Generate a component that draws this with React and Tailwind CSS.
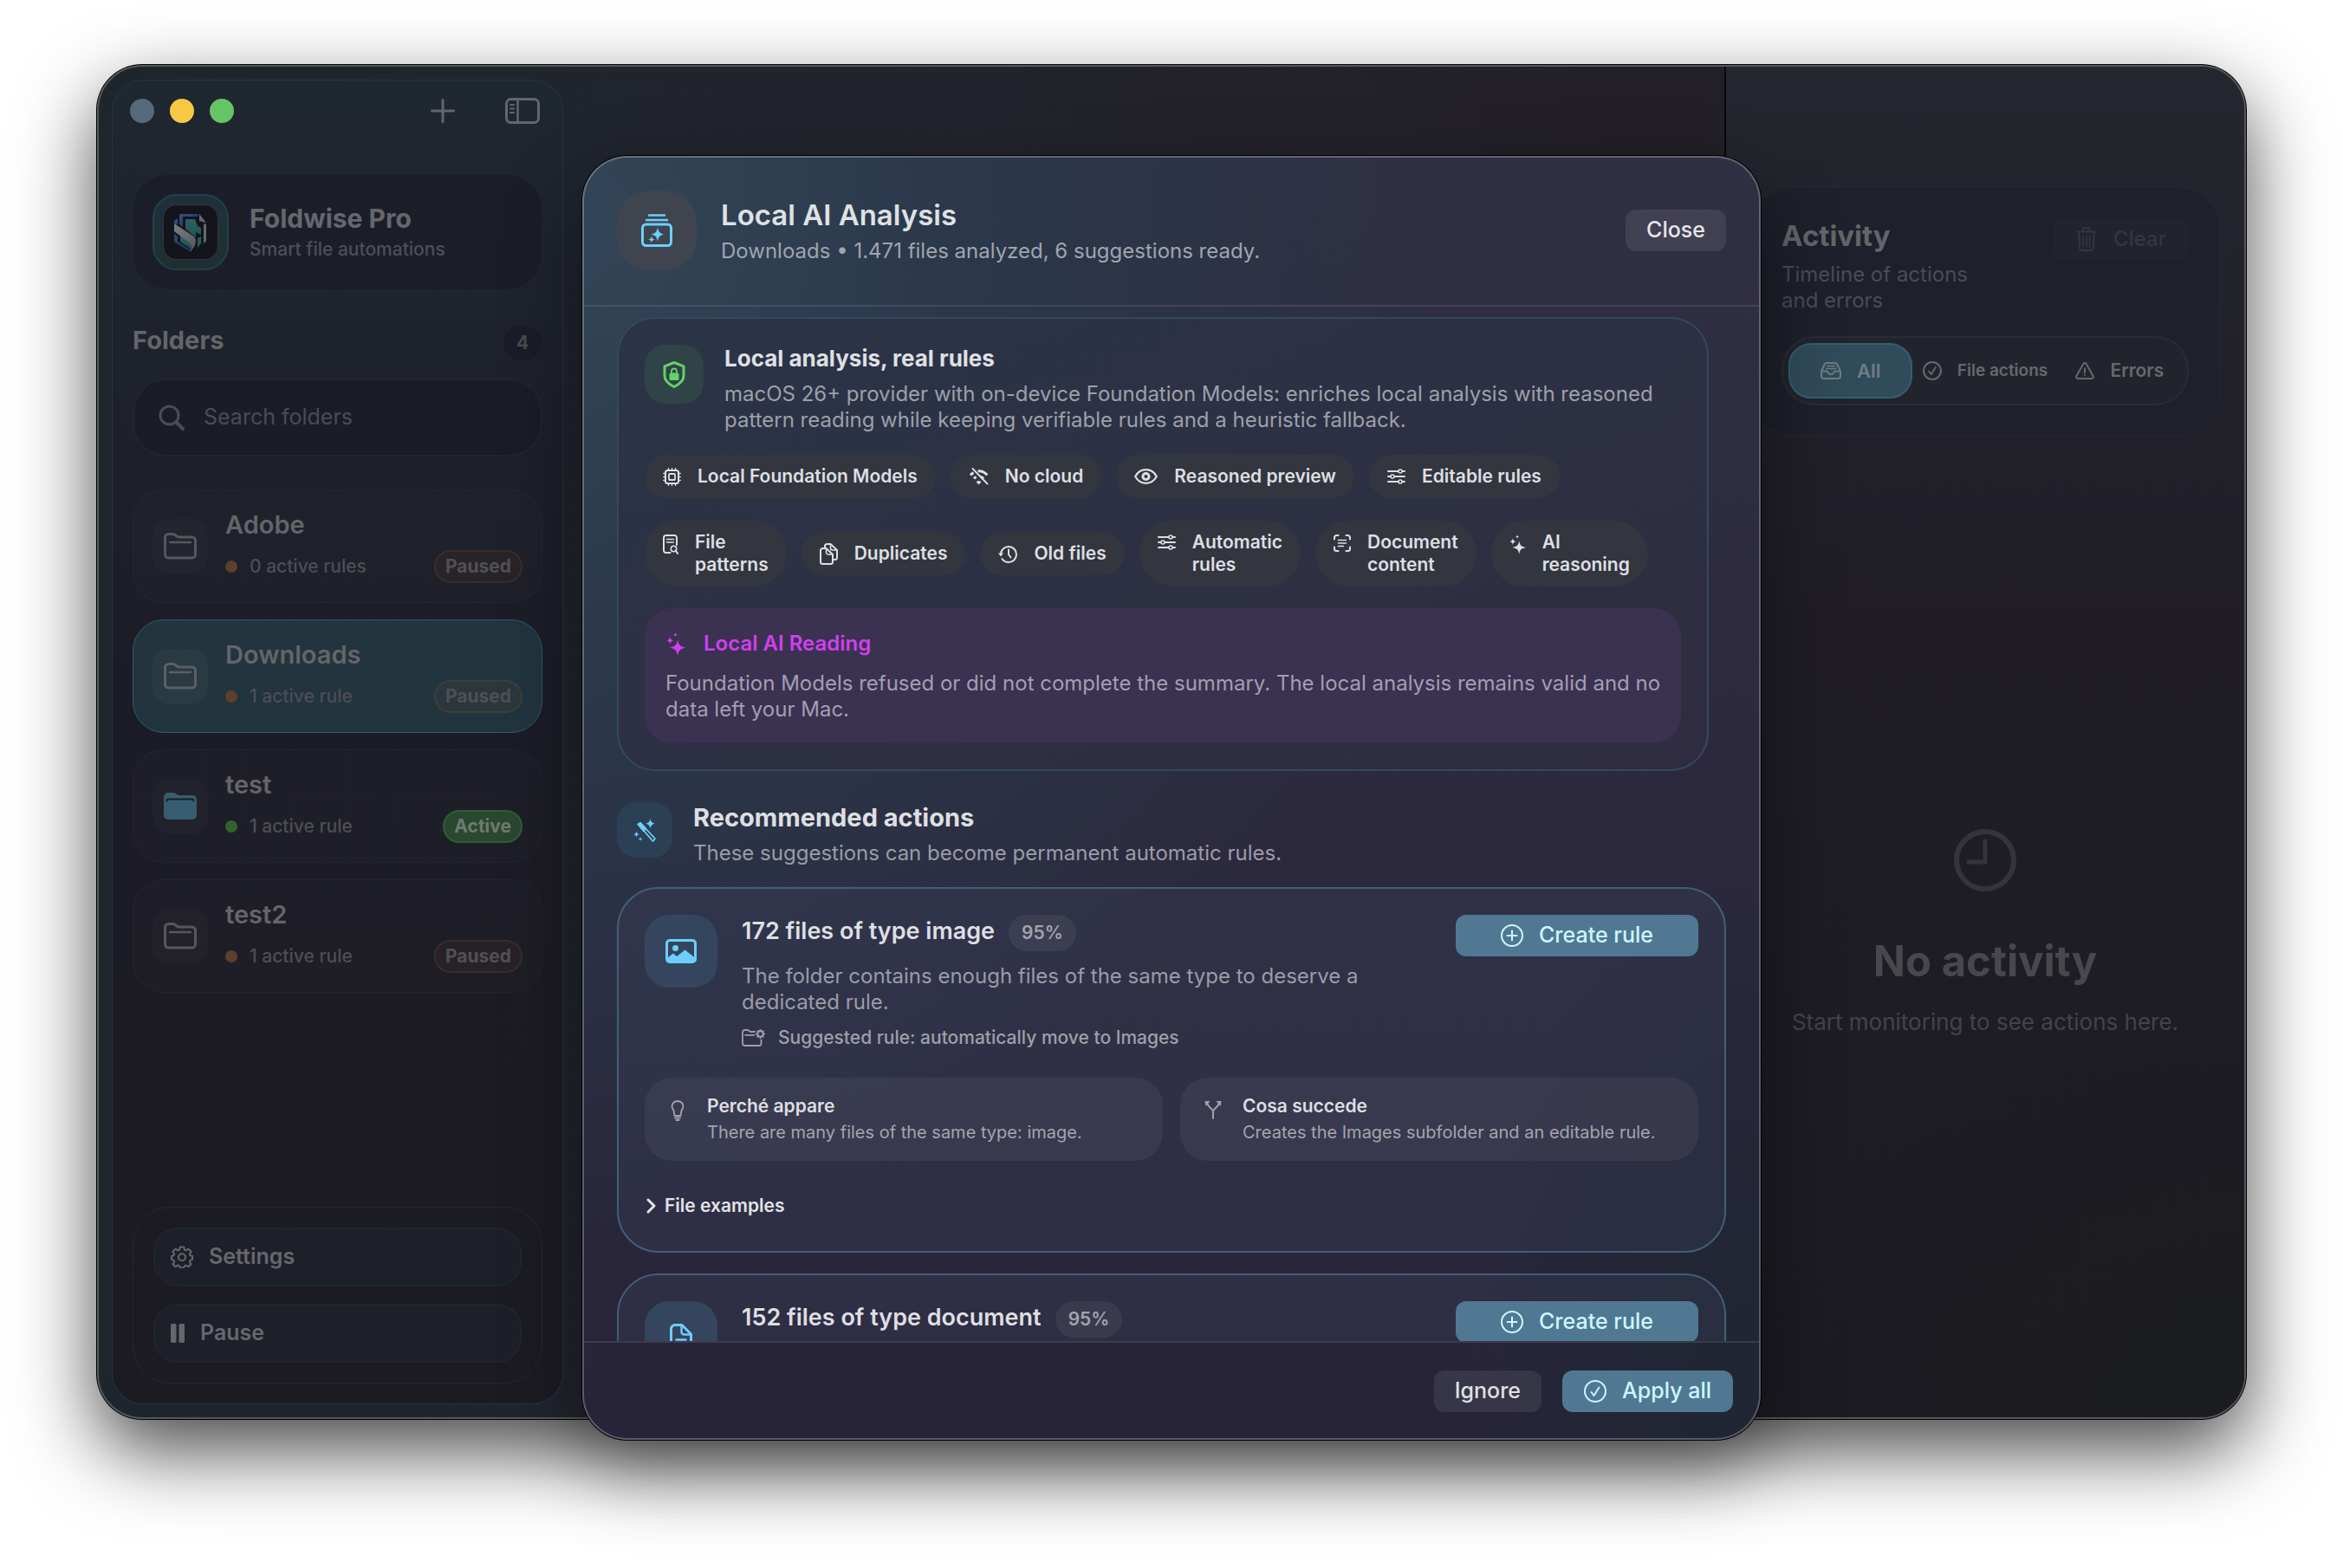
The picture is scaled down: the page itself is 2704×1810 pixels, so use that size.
import { useState } from 'react'
import clsx from 'clsx'

function Icon({ w, h, sw = 2, className, children }) {
  return (
    <svg
      width={w}
      height={h}
      viewBox={`0 0 ${w} ${h}`}
      fill="none"
      stroke="currentColor"
      strokeWidth={sw}
      strokeLinecap="round"
      strokeLinejoin="round"
      className={clsx('shrink-0', className)}
      aria-hidden="true"
    >
      {children}
    </svg>
  )
}

const PlusIcon = () => (
  <Icon w={28} h={28} sw={3}><path d="M14 1.5v25M1.5 14h25" /></Icon>
)

const SidebarIcon = () => (
  <Icon w={40} h={30} sw={3}>
    <rect x="1.5" y="1.5" width="37" height="27" rx="5" />
    <path d="M14.5 2v26" strokeWidth="2.5" />
    <path d="M6 8h4M6 12.5h4M6 17h4" strokeWidth="2" />
  </Icon>
)

const SearchIcon = () => (
  <Icon w={30} h={30} sw={3}>
    <circle cx="12.5" cy="12.5" r="10.5" />
    <path d="M20.5 20.5l7.5 7.5" strokeWidth="4" />
  </Icon>
)

const FolderIcon = () => (
  <Icon w={38} h={31} sw={3}>
    <path d="M1.5 25V5.5a4 4 0 0 1 4-4h5c3 0 4 3.5 7 3.5h15a4 4 0 0 1 4 4v16a4 4 0 0 1-4 4h-27a4 4 0 0 1-4-4z" />
    <path d="M7 11h24" strokeWidth="2.5" />
  </Icon>
)

const FolderFillIcon = () => (
  <Icon w={38} h={31}>
    <path d="M0 7V5a5 5 0 0 1 5-5h6c3 0 4 3 7 3h15a5 5 0 0 1 5 4.5V26a5 5 0 0 1-5 5H5a5 5 0 0 1-5-5z" fill="currentColor" stroke="none" />
    <path d="M3.5 9.5c0-1 .7-2 2-2h27c1.300 0 2 1 2 2" stroke="#1c1c26" strokeWidth="2" />
  </Icon>
)

const GearIcon = () => (
  <Icon w={26} h={26}>
    <path d="M10.8 1.500h4.400l.7 3.100 1.900.8 2.700-1.700 3.100 3.100-1.700 2.700.8 1.900 2.300.6v4l-2.300.6-.8 1.900 1.700 2.700-3.100 3.100-2.700-1.700-1.900.8-.7 2.100h-4.400l-.7-2.100-1.900-.8-2.700 1.700-3.100-3.100 1.700-2.700-.8-1.900-2.300-.6v-4l2.300-.6.8-1.900-1.700-2.700 3.100-3.100 2.700 1.700 1.900-.8z" />
    <circle cx="13" cy="13.200" r="4" />
  </Icon>
)

const PauseIcon = () => (
  <Icon w={16} h={22}>
    <rect width="6.5" height="22" rx="1.5" fill="currentColor" stroke="none" />
    <rect x="9.5" width="6.5" height="22" rx="1.5" fill="currentColor" stroke="none" />
  </Icon>
)

const TrashIcon = () => (
  <Icon w={24} h={28}>
    <path d="M1 5.5h22M8 5V3a2 2 0 0 1 2-2h4a2 2 0 0 1 2 2v2M3 5.5l1.200 18.500a3 3 0 0 0 3 3h9.600a3 3 0 0 0 3-3L21 5.500" />
    <path d="M8 10l.4 12.500M12 10v12.500M16 10l-.4 12.500" strokeWidth="1.5" />
  </Icon>
)

const TrayIcon = () => (
  <Icon w={24} h={20}>
    <path d="M1 10.500L4.500 3a3 3 0 0 1 2.700-2h9.600a3 3 0 0 1 2.700 2L23 10.500V16a3 3 0 0 1-3 3H4a3 3 0 0 1-3-3z" />
    <path d="M1 10.500h6.500c.8 0 1 3.500 4.500 3.500s3.700-3.500 4.500-3.500H23" />
    <path d="M7.500 4.500h9M6.500 7.500h11" strokeWidth="1.5" />
  </Icon>
)

const CheckCircleIcon = ({ size = 22 }) => (
  <Icon w={size} h={size}>
    <circle cx={size / 2} cy={size / 2} r={size / 2 - 1} />
    <path d={size > 22 ? 'M8.500 14l3 4 6-9.500' : 'M7 11.500l2.800 3.500 5-8'} />
  </Icon>
)

const PlusCircleIcon = () => (
  <Icon w={26} h={26}>
    <circle cx="13" cy="13" r="12" />
    <path d="M13 7.500v11M7.500 13h11" />
  </Icon>
)

const WarnIcon = () => (
  <Icon w={22} h={20}>
    <path d="M9.300 2a2 2 0 0 1 3.400 0l8 14.200A1.900 1.900 0 0 1 19 19H3a1.900 1.900 0 0 1-1.700-2.800z" />
    <path d="M11 7v5.500M11 15.500v.1" />
  </Icon>
)

const ClockIcon = () => (
  <Icon w={72} h={72} sw={6}>
    <circle cx="36" cy="36" r="33" />
    <path d="M36 14v24H17" strokeWidth="5" />
  </Icon>
)

const StackIcon = () => (
  <Icon w={36} h={38} sw={3}>
    <path d="M9 1.500h18M6 7h24" strokeWidth="2.5" />
    <rect x="1.5" y="12" width="33" height="24.5" rx="4" />
    <path d="M19 15c1 5.800 2.300 7.400 7.500 8.500-5.200 1.100-6.500 2.700-7.500 8.500-1-5.800-2.300-7.400-7.500-8.500 5.200-1.100 6.500-2.700 7.500-8.500zM12 25.500c.5 2.700 1.200 3.500 3.800 4-2.600.5-3.300 1.300-3.800 4-.5-2.700-1.200-3.500-3.800-4 2.600-.5 3.300-1.300 3.800-4z" fill="currentColor" stroke="none" />
  </Icon>
)

const ShieldLockIcon = () => (
  <Icon w={26} h={31} sw={3}>
    <path d="M13 1.500l11 4.300v11c0 6-4.500 9.500-11 12.700C6.500 26.300 2 22.800 2 16.800v-11z" />
    <rect x="7.5" y="13.5" width="11" height="8.5" rx="1.5" fill="currentColor" stroke="none" />
    <path d="M10 14v-2.500a3 3 0 0 1 6 0V14" strokeWidth="1.8" />
  </Icon>
)

const CpuIcon = () => (
  <Icon w={21} h={21}>
    <rect x="3" y="3" width="15" height="15" rx="2.5" />
    <rect x="7" y="7" width="7" height="7" rx="1" strokeWidth="1.8" />
    <path d="M6.500 .8v1.500M10.500 .8v1.500M14.500 .8v1.500M6.500 18.700v1.500M10.500 18.700v1.500M14.500 18.700v1.500M.8 6.500h1.500M.8 10.500h1.500M.8 14.500h1.500M18.700 6.500h1.500M18.700 10.500h1.500M18.700 14.500h1.500" strokeWidth="1.4" />
  </Icon>
)

const WifiOffIcon = () => (
  <Icon w={23} h={20} sw={3}>
    <path d="M2 8.500C3 7.300 4.200 6.400 5.500 5.600M10.500 3.700c4-.4 7.900 1.300 10.800 4.600M6 12.500c.8-.9 1.700-1.500 2.700-2M13.800 10.300c1.200.5 2.300 1.200 3.200 2.200" strokeLinecap="butt" />
    <path d="M11.500 19.500l-3-3.300c1.700-1.500 4.300-1.500 6 0z" fill="currentColor" stroke="none" />
    <path d="M4.500 1l17 17.500" strokeWidth="1.8" />
  </Icon>
)

const EyeIcon = () => (
  <Icon w={27} h={18} sw={2.2}>
    <path d="M1.200 9C4 4 8.500 1.200 13.500 1.200S23 4 25.800 9C23 14 18.500 16.800 13.500 16.800S4 14 1.200 9z" />
    <circle cx="13.5" cy="9" r="3.6" strokeWidth="3" />
  </Icon>
)

const SlidersIcon = () => (
  <Icon w={21} h={18}>
    <path d="M1 3h11.500M17.500 3H20M1 9h2.500M8.500 9H20M1 15h11.500M17.500 15H20" />
    <circle cx="15" cy="3" r="2" strokeWidth="1.6" />
    <circle cx="6" cy="9" r="2" strokeWidth="1.6" />
    <circle cx="15" cy="15" r="2" strokeWidth="1.6" />
  </Icon>
)

const FileSearchIcon = () => (
  <Icon w={18} h={23}>
    <path d="M8.500 21H3.500A2.500 2.500 0 0 1 1 18.500v-15A2.500 2.500 0 0 1 3.500 1h10A2.500 2.500 0 0 1 16 3.500V12" />
    <path d="M4.500 5.500h8M4.500 9h8" strokeWidth="1.5" />
    <circle cx="12.5" cy="16.5" r="3.2" strokeWidth="1.6" />
    <path d="M15 19l2.200 3" />
  </Icon>
)

const CopyIcon = () => (
  <Icon w={21} h={25}>
    <path d="M6 6V3.500A2.500 2.500 0 0 1 8.500 1h4L20 8v8.500a2.500 2.500 0 0 1-2.500 2.500H15" />
    <path d="M12.500 1.500v4A2.500 2.500 0 0 0 15 8h5" strokeWidth="1.6" />
    <path d="M1 8.500A2.500 2.500 0 0 1 3.500 6h4l7.500 7v8.500a2.500 2.500 0 0 1-2.500 2.500h-9A2.500 2.500 0 0 1 1 21.500z" />
    <path d="M7.500 6.500v4A2.500 2.500 0 0 0 10 13h5" strokeWidth="1.6" />
  </Icon>
)

const HistoryIcon = () => (
  <Icon w={22} h={21}>
    <path d="M3 10.500A9 9 0 1 1 12 20c-3.500 0-6-1.500-7.500-4" />
    <path d="M0 9.500h6L3 13.500z" fill="currentColor" stroke="none" />
    <path d="M12 5.500v5.500l2.500 3.500" />
  </Icon>
)

const ScanTextIcon = () => (
  <Icon w={20} h={20}>
    <path d="M1 5.500v-2A2.500 2.500 0 0 1 3.500 1h2M14.500 1h2A2.500 2.500 0 0 1 19 3.500v2M19 14.500v2a2.500 2.500 0 0 1-2.500 2.500h-2M5.500 19h-2A2.500 2.500 0 0 1 1 16.500v-2" />
    <path d="M5.500 6.500h9M5.500 10h9M5.500 13.500h6" strokeWidth="1.6" />
  </Icon>
)

const SparklesIcon = ({ w = 19, h = 23 }) => (
  <svg width={w} height={h} viewBox="0 0 22 26" fill="currentColor" className="shrink-0" aria-hidden="true">
    <path d="M13 8c1 6 2.800 7.800 9 9-6.200 1.200-8 3-9 9-1-6-2.800-7.800-9-9 6.200-1.200 8-3 9-9zM4.500 4.500c.5 3 1.500 4 4.500 4.500-3 .5-4 1.500-4.500 4.500C4 10.500 3 9.500 0 9c3-.5 4-1.500 4.500-4.500zM10.500 0c.3 1.800.9 2.400 2.700 2.700-1.800.3-2.400.9-2.700 2.700-.3-1.800-.9-2.400-2.700-2.700C9.600 2.400 10.200 1.800 10.500 0z" />
  </svg>
)

const WandIcon = () => (
  <Icon w={26} h={27} sw={2}>
    <path d="M5.500 6.500L8 5l17 18-2.500 3z" strokeWidth="1.8" />
    <path d="M5.500 6.500L8 5l6 6.500-2.500 2.500z" fill="currentColor" />
    <path d="M19.500 0c.8 3.800 1.800 4.900 5.500 5.700-3.700.8-4.700 1.900-5.500 5.700-.8-3.800-1.800-4.900-5.500-5.700 3.700-.8 4.700-1.900 5.500-5.700zM3.500 14.500c.5 2.400 1.200 3.100 3.500 3.600-2.300.5-3 1.200-3.500 3.600-.5-2.400-1.200-3.100-3.500-3.600 2.300-.5 3-1.200 3.500-3.600zM8 21c.3 1.800.8 2.200 2.500 2.600-1.700.4-2.200.8-2.500 2.600-.3-1.800-.8-2.200-2.500-2.600C7.200 23.200 7.700 22.800 8 21z" fill="currentColor" stroke="none" />
  </Icon>
)

const PhotoIcon = () => (
  <Icon w={36} h={28} sw={3}>
    <rect x="1.5" y="1.5" width="33" height="25" rx="3.5" />
    <circle cx="11.5" cy="10.5" r="3.5" fill="currentColor" stroke="none" />
    <path d="M2 22l7-5.500 4 3.500 9.500-7.500L34 21.500V25l-2 1.500H4L2 25z" fill="currentColor" stroke="none" />
  </Icon>
)

const DocIcon = () => (
  <Icon w={26} h={32} sw={3}>
    <path d="M1.500 6A4.500 4.500 0 0 1 6 1.500h8L24.500 12v14a4.500 4.500 0 0 1-4.500 4.500H6A4.500 4.500 0 0 1 1.500 26z" />
    <path d="M13.500 2v7.500a3 3 0 0 0 3 3H24M7.500 18.500h11M7.500 24h11" strokeWidth="2.5" />
  </Icon>
)

const FolderGearIcon = () => (
  <Icon w={27} h={20} sw={1.8}>
    <path d="M22.500 12.500v4a2.500 2.500 0 0 1-2.500 2.500H3.500A2.500 2.500 0 0 1 1 16.500v-13A2.500 2.500 0 0 1 3.500 1h3c2 0 2.300 2 4 2h4.500M4 6.800h10.500" />
    <circle cx="21.5" cy="5.5" r="3.3" strokeWidth="2.2" />
    <path d="M21.500 .5v1M21.500 9.500v1M16.500 5.500h1M25.500 5.500h1M18 2l.7.7M24.300 8.300l.7.7M18 9l.7-.7M24.300 2.700l.7-.7" strokeWidth="1.6" />
  </Icon>
)

const BulbIcon = () => (
  <Icon w={28} h={24} sw={1.8}>
    <path d="M10.500 18l-1-6C8.500 10 7.500 9 7.500 7a6.500 6 0 0 1 13 0c0 2-1 3-2 5l-1 6zM11 20.500h6M12.500 23h3" />
  </Icon>
)

const BranchIcon = () => (
  <Icon w={28} h={22}>
    <path d="M14 21v-8c0-3-5.500-4-6.500-9M14 13c0-3 5.500-4 6.500-9" />
    <path d="M4.500 1h6L5.500 7zM23.500 1h-6l5 6z" fill="currentColor" stroke="none" />
  </Icon>
)

const ChevronIcon = () => (
  <Icon w={14} h={18} sw={3}><path d="M4 2l7 7-7 7" /></Icon>
)

function Logo() {
  return (
    <svg width="64" height="64" viewBox="0 0 64 64" aria-hidden="true">
      <defs>
        <linearGradient id="logoBlue" x1="0" y1="0" x2="1" y2="1">
          <stop offset="0" stopColor="#34507e" />
          <stop offset="1" stopColor="#1d2f5c" />
        </linearGradient>
        <linearGradient id="logoTeal" x1="0" y1="0" x2="0" y2="1">
          <stop offset="0" stopColor="#2c6064" />
          <stop offset="1" stopColor="#1f5550" />
        </linearGradient>
        <linearGradient id="logoSilver" x1="0" y1="0" x2="1" y2="1">
          <stop offset="0" stopColor="#7b7d84" />
          <stop offset="1" stopColor="#54565e" />
        </linearGradient>
      </defs>
      <rect x=".5" y=".5" width="63" height="63" rx="15" fill="#13141c" stroke="#34363f" />
      <path d="M20 11h22l-3 3H23v12l-4-3V12z" fill="url(#logoBlue)" />
      <path d="M26 17h11l3 8 4 2v8l-6-3v6L26 28z" fill="url(#logoTeal)" />
      <path d="M13 19l4-3v7l-4-1zM13 34l4 3v6l15 9v3L13 43z" fill="url(#logoBlue)" />
      <path d="M20 35l12 8v8l-12-8z" fill="url(#logoTeal)" />
      <path d="M13 22l20 13c5 3 6 6 4 12l-5 8c1-6 1-10-3-12L13 31z" fill="url(#logoSilver)" />
      <path d="M42 11l8 10-8-2zM47 22l3 1v19l-3 3z" fill="#666a70" />
      <path d="M40 39l4-2v8l-4 5z" fill="url(#logoTeal)" />
    </svg>
  )
}

const folders = [
  { name: 'Adobe', rules: '0 active rules' },
  { name: 'Downloads', rules: '1 active rule', selected: true },
  { name: 'test', rules: '1 active rule', active: true },
  { name: 'test2', rules: '1 active rule' }
]

const modeChips = [
  { label: 'Local Foundation Models', icon: <CpuIcon /> },
  { label: 'No cloud', icon: <WifiOffIcon /> },
  { label: 'Reasoned preview', icon: <EyeIcon /> },
  { label: 'Editable rules', icon: <SlidersIcon /> }
]

const scopeChips = [
  { label: 'File patterns', icon: <FileSearchIcon />, wrap: true },
  { label: 'Duplicates', icon: <CopyIcon /> },
  { label: 'Old files', icon: <HistoryIcon /> },
  { label: 'Automatic rules', icon: <SlidersIcon />, wrap: true },
  { label: 'Document content', icon: <ScanTextIcon />, wrap: true },
  { label: 'AI reasoning', icon: <SparklesIcon />, wrap: true }
]

const suggestions = [
  {
    title: '172 files of type image',
    score: '95%',
    icon: <PhotoIcon />,
    details: {
      summary: 'The folder contains enough files of the same type to deserve a dedicated rule.',
      rule: 'Suggested rule: automatically move to Images',
      why: 'There are many files of the same type: image.',
      effect: 'Creates the Images subfolder and an editable rule.'
    }
  },
  {
    title: '152 files of type document',
    score: '95%',
    icon: <DocIcon />
  }
]

const filters = [
  { id: 'all', label: 'All', icon: <TrayIcon />, size: 'text-[22px]' },
  { id: 'files', label: 'File actions', icon: <CheckCircleIcon />, size: 'text-[19px]' },
  { id: 'errors', label: 'Errors', icon: <WarnIcon />, size: 'text-[21px]' }
]

function FolderItem({ folder }) {
  return (
    <button
      type="button"
      className={clsx(
        'flex w-full items-center gap-5 rounded-[36px] border px-[22px] py-[22px] text-left',
        folder.selected ? 'border-[#2b5d72] bg-[#22343e]' : 'border-white/3 bg-white/1'
      )}
    >
      <span
        className={clsx(
          'flex size-16 shrink-0 items-center justify-center rounded-[20px]',
          folder.selected && 'bg-[#2a3a42] text-[#596064]',
          folder.active && 'bg-white/2 text-[#375d71]',
          !folder.selected && !folder.active && 'bg-white/2 text-[#57575c]'
        )}
      >
        {folder.active ? <FolderFillIcon /> : <FolderIcon />}
      </span>
      <span className="flex min-w-0 flex-1 flex-col gap-[11px]">
        <span className="text-[29px] leading-9 font-semibold text-[#656569]">{folder.name}</span>
        <span className="flex h-[38px] items-center">
          <span className={clsx('mr-3.5 size-3.5 rounded-full', folder.active ? 'bg-[#33622f]' : 'bg-[#5c402c]')} />
          <span className="text-[21px] leading-7 font-medium text-[#4d4e54]">{folder.rules}</span>
          <span
            className={clsx(
              'ml-auto flex h-[38px] items-center rounded-full border-2 px-[11px] text-[21px] font-bold',
              folder.active
                ? 'border-[#2f5d35] bg-[#2a4730] text-[#6e7a70]'
                : 'border-[#d0702d]/12 bg-[#d0702d]/5 text-[#515054]'
            )}
          >
            {folder.active ? 'Active' : 'Paused'}
          </span>
        </span>
      </span>
    </button>
  )
}

function Sidebar() {
  return (
    <aside className="m-[15px] flex w-[521px] shrink-0 flex-col rounded-[36px] border border-[#26344a] bg-linear-to-b from-[#1f2730] via-[#1c1c27] via-45% to-[#1c1b22]">
      <div className="flex h-[70px] shrink-0 items-center pr-[26px] pl-5 text-[#656669]">
        <div className="flex gap-[18px]">
          <button type="button" aria-label="Close window" className="size-7 rounded-full bg-[#56697d]" />
          <button type="button" aria-label="Minimize window" className="size-7 rounded-full bg-[#f5c944]" />
          <button type="button" aria-label="Zoom window" className="size-7 rounded-full bg-[#66c466]" />
        </div>
        <button type="button" aria-label="Add folder" className="ml-auto"><PlusIcon /></button>
        <button type="button" aria-label="Toggle sidebar" className="ml-[58px]"><SidebarIcon /></button>
      </div>

      <div className="flex min-h-0 flex-1 flex-col px-[23px] pt-[38px] pb-[23px]">
        <div className="flex items-center gap-6 rounded-[40px] border border-white/3 bg-[#1b1e29] p-[22px]">
          <div className="flex size-[88px] items-center justify-center rounded-[28px] border-2 border-[#233f4a] bg-linear-to-b from-[#1f303b] to-[#1f2f30]">
            <Logo />
          </div>
          <div className="flex flex-col gap-1">
            <h1 className="text-[30px] leading-9 font-bold text-[#66676c]">Foldwise Pro</h1>
            <p className="text-[21px] leading-7 font-medium text-[#4d4f56]">Smart file automations</p>
          </div>
        </div>

        <div className="mt-10 flex items-start justify-between">
          <h2 className="text-[29px] leading-9 font-bold text-[#646569]">Folders</h2>
          <span className="flex h-[42px] w-[46px] items-center justify-center rounded-full border border-white/3 bg-[#1b1c27] text-[21px] font-bold text-[#4a4b52]">4</span>
        </div>

        <label className="mt-5 flex h-[90px] shrink-0 items-center gap-[22px] rounded-[38px] border-2 border-white/4 bg-[#1a1d28] px-7 text-[#4b4c52]">
          <SearchIcon />
          <input
            type="search"
            aria-label="Search folders"
            placeholder="Search folders"
            className="min-w-0 flex-1 bg-transparent text-[25px] outline-none placeholder:text-[#4b4c52]"
          />
        </label>

        <nav className="mt-[38px] flex flex-col gap-[19px]">
          {folders.map((folder) => (
            <FolderItem key={folder.name} folder={folder} />
          ))}
        </nav>

        <div className="mt-auto flex flex-col gap-5 rounded-[44px] border border-white/5 p-[23px] text-[25px] font-semibold text-[#66676c]">
          <button type="button" className="flex h-[68px] items-center gap-[18px] rounded-[28px] border-2 border-[#1e2630] bg-[#1d1f29] px-[18px]">
            <GearIcon />
            Settings
          </button>
          <button type="button" className="flex h-[68px] items-center gap-[18px] rounded-[28px] border-2 border-[#1e2630] bg-[#1d1f29] px-[18px]">
            <PauseIcon />
            Pause
          </button>
        </div>
      </div>
    </aside>
  )
}

function ActivityPanel() {
  const [filter, setFilter] = useState('all')

  return (
    <aside className="ml-auto flex w-[600px] shrink-0 flex-col border-l-2 border-[#08080a] bg-[radial-gradient(ellipse_90%_30%_at_100%_100%,#1b1d20_0%,transparent_100%),linear-gradient(to_bottom,#24272f,#22222b_18%,#201d27_40%,#1e1c24_70%,#1d1b22)] px-7 pt-[139px]">
      <section className="rounded-[48px] border border-[#212b36] bg-[#1e202b] p-[35px]">
        <div className="flex items-start justify-between">
          <div>
            <h2 className="text-[33px] leading-10 font-bold text-[#646569]">Activity</h2>
            <p className="mt-[10px] w-[240px] text-[24px] leading-[30px] text-[#4b4c53]">Timeline of actions and errors</p>
          </div>
          <button type="button" disabled className="flex h-12 items-center gap-[19px] rounded-xl bg-[#21242c] px-[26px] text-[24px] font-medium text-[#33363e]">
            <TrashIcon />
            Clear
          </button>
        </div>
        <div className="mt-[26px] grid grid-cols-3 gap-3 rounded-[38px] border-2 border-white/4 bg-[#22242d] p-1.5">
          {filters.map((f) => (
            <button
              key={f.id}
              type="button"
              onClick={() => setFilter(f.id)}
              className={clsx(
                'flex h-16 items-center justify-center gap-[18px] rounded-[26px] border-2 font-semibold whitespace-nowrap',
                f.size,
                filter === f.id ? 'border-[#336072] bg-[#304b59] text-[#6f7d84]' : 'border-transparent text-[#67686c]'
              )}
            >
              {f.icon}
              {f.label}
            </button>
          ))}
        </div>
      </section>

      <div className="flex flex-1 flex-col items-center justify-center pt-3 text-center">
        <span className="text-[#35343b]"><ClockIcon /></span>
        <p className="mt-[51px] text-[49px] leading-[60px] font-bold text-[#48474c]">No activity</p>
        <p className="mt-6 text-[26px] leading-8 text-[#444348]">Start monitoring to see actions here.</p>
      </div>
    </aside>
  )
}

function Chip({ chip }) {
  return (
    <span
      className={clsx(
        'flex gap-[19px] rounded-[38px] bg-[#33363f] px-[21px] py-3 text-[21px] leading-[26px] font-semibold text-[#dedfe2]',
        chip.wrap ? 'w-min items-start' : 'items-center whitespace-nowrap'
      )}
    >
      <span className={clsx(chip.wrap && 'mt-1')}>{chip.icon}</span>
      {chip.label}
    </span>
  )
}

function AnalysisSummary() {
  return (
    <section className="mr-5 flex flex-col gap-6 rounded-[44px] border-2 border-[#334960] bg-linear-to-br from-[#2b3447] to-[#2f2c41] p-[30px]">
      <div className="flex items-start gap-6">
        <span className="flex size-[68px] shrink-0 items-center justify-center rounded-[24px] bg-[#304347] text-[#65d267]">
          <ShieldLockIcon />
        </span>
        <div>
          <h3 className="text-[26px] leading-8 font-bold text-[#dfe0e3]">Local analysis, real rules</h3>
          <p className="mt-[10px] text-[24px] leading-[30px] text-[#9da0aa]">
            macOS 26+ provider with on-device Foundation Models: enriches local analysis with reasoned pattern reading while keeping verifiable rules and a heuristic fallback.
          </p>
        </div>
      </div>
      <div className="flex h-[52px] items-center gap-[17px]">
        {modeChips.map((chip) => (
          <Chip key={chip.label} chip={chip} />
        ))}
      </div>
      <div className="flex h-[78px] items-center gap-[17px]">
        {scopeChips.map((chip) => (
          <Chip key={chip.label} chip={chip} />
        ))}
      </div>
      <div className="rounded-[32px] bg-[#3b3151] py-6 pr-4 pl-6">
        <h4 className="flex items-center gap-5 text-[24px] leading-[34px] font-semibold text-[#d03ff0]">
          <SparklesIcon w={24} h={27} />
          Local AI Reading
        </h4>
        <p className="mt-[14px] text-[24px] leading-[30px] text-[#a39fb0]">
          Foundation Models refused or did not complete the summary. The local analysis remains valid and no data left your Mac.
        </p>
      </div>
    </section>
  )
}

function InfoBox({ icon, title, children }) {
  return (
    <div className="flex items-start gap-5 rounded-[32px] bg-white/5 px-6 py-[19px]">
      <span className="mt-[7px] text-[#a3a2ad]">{icon}</span>
      <div className="flex flex-col gap-[2px] leading-7">
        <h4 className="text-[21px] font-semibold text-[#dedee1]">{title}</h4>
        <p className="text-[20px] text-[#a5a4ae]">{children}</p>
      </div>
    </div>
  )
}

function SuggestionCard({ item }) {
  const { details } = item

  return (
    <article className="rounded-[48px] border-2 border-[#3f607a] bg-[#3a4058]/35 p-[30px]">
      <div className="flex items-start gap-7">
        <span className="flex size-[84px] shrink-0 items-center justify-center rounded-[28px] bg-[#35455d] text-[#6ccffb]">
          {item.icon}
        </span>
        <div className="min-w-0 flex-1">
          <div className="flex items-baseline gap-4">
            <h3 className="text-[27px] leading-[34px] font-semibold text-[#dfdfe2]">{item.title}</h3>
            <span className="rounded-full bg-white/6 px-[15px] text-[21px] leading-[42px] font-semibold text-[#a3a2ac]">{item.score}</span>
          </div>
          {details && (
            <>
              <p className="mt-[14px] text-[24px] leading-[30px] text-[#9c9ba8]">{details.summary}</p>
              <p className="mt-3 flex items-center gap-[15px] text-[21px] leading-7 font-medium text-[#a09faa]">
                <FolderGearIcon />
                {details.rule}
              </p>
            </>
          )}
        </div>
        <button type="button" className="flex h-12 w-[280px] shrink-0 items-center justify-center gap-[18px] rounded-xl bg-[#507893] text-[25px] font-medium text-[#cdf6fd]">
          <PlusCircleIcon />
          Create rule
        </button>
      </div>
      {details && (
        <>
          <div className="mt-8 grid grid-cols-2 gap-5">
            <InfoBox icon={<BulbIcon />} title="Perché appare">{details.why}</InfoBox>
            <InfoBox icon={<BranchIcon />} title="Cosa succede">{details.effect}</InfoBox>
          </div>
          <button type="button" className="mt-7 flex items-center gap-[9px] pt-2.5 pb-2 text-[21px] leading-7 font-semibold text-[#e3e3e6]">
            <ChevronIcon />
            File examples
          </button>
        </>
      )}
    </article>
  )
}

function AnalysisDialog() {
  return (
    <div
      role="dialog"
      aria-labelledby="analysis-title"
      className="absolute inset-x-0 top-[105px] -bottom-6 mx-auto flex w-full max-w-[1360px] flex-col overflow-hidden rounded-[52px] border-2 border-white/25 bg-[#2a283c] bg-[radial-gradient(ellipse_75%_80%_at_0%_5%,#334558_0%,#2b374a_45%,transparent_100%),radial-gradient(ellipse_25%_45%_at_100%_100%,#1f2632_0%,transparent_100%),linear-gradient(to_bottom,#302f43,#2c293e_50%,#272439)] bg-origin-border shadow-[0_0_0_1px_#000,0_36px_90px_rgba(0,0,0,0.45)]"
    >
      <header className="flex items-center gap-7 border-b-2 border-white/10 px-[38px] pt-[38px] pb-10">
        <span className="flex size-[92px] shrink-0 items-center justify-center rounded-[36px] bg-[#3f444f] text-[#6ccffb]">
          <StackIcon />
        </span>
        <div className="flex flex-1 flex-col gap-[7px]">
          <h2 id="analysis-title" className="text-[33px] leading-10 font-semibold text-[#dfe1e4]">Local AI Analysis</h2>
          <p className="text-[24px] leading-[30px] text-[#9fa5ae]">Downloads • 1.471 files analyzed, 6 suggestions ready.</p>
        </div>
        <button type="button" className="h-12 rounded-xl bg-white/9 px-6 text-[25px] font-medium text-[#e6e6e9]">Close</button>
      </header>

      <div className="min-h-0 flex-1 overflow-hidden px-[38px] pt-3">
        <AnalysisSummary />

        <div className="mt-9 flex items-start gap-6">
          <span className="flex size-16 shrink-0 items-center justify-center rounded-[22px] bg-[#2c4055] text-[#6ccffb]">
            <WandIcon />
          </span>
          <div className="flex flex-col gap-2">
            <h3 className="text-[29px] leading-9 font-bold text-[#dfdfe2]">Recommended actions</h3>
            <p className="text-[24px] leading-[30px] text-[#9b9ca7]">These suggestions can become permanent automatic rules.</p>
          </div>
        </div>

        <div className="mt-6 flex flex-col gap-6">
          {suggestions.map((item) => (
            <SuggestionCard key={item.title} item={item} />
          ))}
        </div>
      </div>

      <footer className="flex justify-end gap-6 border-t-2 border-white/10 px-[30px] pt-8 pb-[30px] text-[25px] font-medium">
        <button type="button" className="h-12 rounded-xl bg-white/8 px-6 text-[#e0e0e3]">Ignore</button>
        <button type="button" className="flex h-12 items-center gap-[18px] rounded-xl bg-[#507893] px-[25px] text-[#cdf6fd]">
          <CheckCircleIcon size={26} />
          Apply all
        </button>
      </footer>
    </div>
  )
}

export default function App() {
  return (
    <div className="flex h-screen flex-col overflow-hidden bg-white px-28 pt-[75px] pb-[172px] font-['Inter',sans-serif]">
      <div className="relative min-h-0 flex-1">
        <main className="flex h-full overflow-hidden rounded-[52px] border-2 border-[#54585a] bg-[#1d1c22] bg-[linear-gradient(to_right,#1d252d,#22242d_35%,#231f28_70%)] shadow-[0_0_0_1px_#000,0_36px_90px_rgba(0,0,0,0.72)]">
          <Sidebar />
          <ActivityPanel />
        </main>
        <AnalysisDialog />
      </div>
    </div>
  )
}
